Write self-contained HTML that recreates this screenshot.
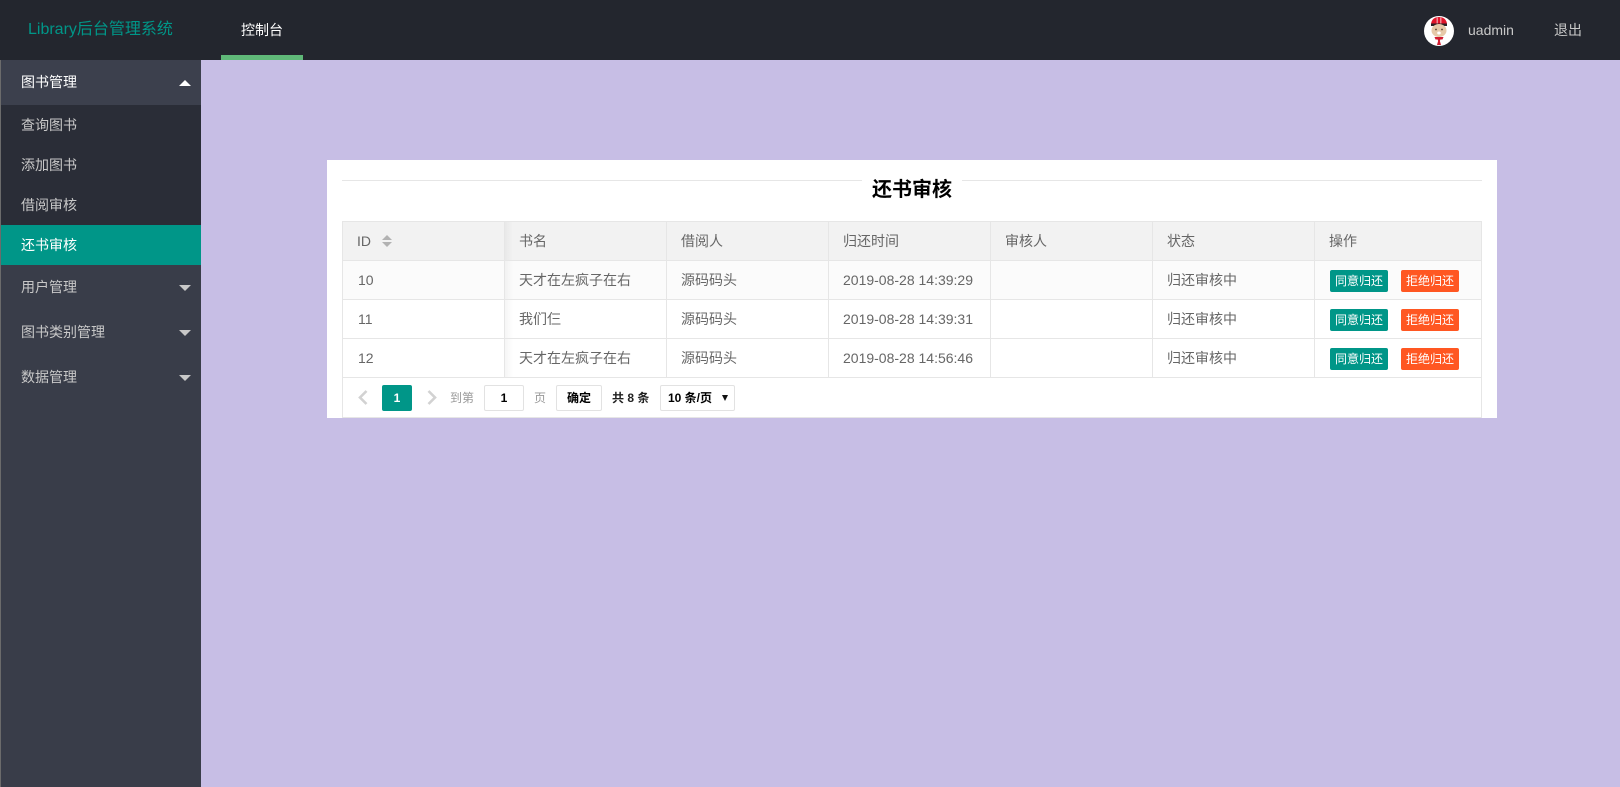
<!DOCTYPE html>
<html lang="zh-CN">
<head>
<meta charset="utf-8">
<title>还书审核</title>
<style>
*{box-sizing:border-box;margin:0;padding:0}
html,body{width:1620px;height:787px;overflow:hidden;background:#c7bee5;font-family:"Liberation Sans","WenQuanYi Zen Hei","Noto Sans CJK SC",sans-serif;font-size:14px;color:#666}
.a{position:absolute;white-space:nowrap}
#hd{left:0;top:0;width:1620px;height:60px;background:#23262e}
#side{left:0;top:60px;width:201px;height:727px;background:#393d49;border-left:1px solid #6b6b6b}
.mi{position:absolute;left:0;width:200px;line-height:45px;height:45px;padding-left:20px;color:#c8c8c8}
.ci{position:absolute;left:0;width:200px;line-height:40px;height:40px;padding-left:20px;color:#c8c8c8;background:#2a2d37}
.tri{position:absolute;left:178px;width:0;height:0;border-left:6px solid transparent;border-right:6px solid transparent}
#card{left:327px;top:160px;width:1170px;height:258px;background:#fff}
.line{position:absolute;height:1px;background:#e6e6e6;top:20px}
.h{position:absolute;left:342px;width:1140px;height:1px;background:#e6e6e6}
.v{position:absolute;top:221px;width:1px;height:156px;background:#e6e6e6}
.c{position:absolute;line-height:38px;height:38px;color:#666}
.btn{position:absolute;width:58px;height:22px;line-height:22px;text-align:center;color:#fff;font-size:12px;border-radius:2px}
.box{position:absolute;top:385px;height:26px;line-height:24px;text-align:center;border:1px solid #e2e2e2;border-radius:2px;font-size:12px;font-weight:bold;color:#000;background:#fff}
.pt{position:absolute;top:385px;line-height:26px;font-size:12px;color:#999}
</style>
</head>
<body>
<div id="hd" class="a"></div>
<div class="a" style="left:28px;top:0;line-height:60px;font-size:16px;color:#009688">Library后台管理系统</div>
<div class="a" style="left:241px;top:0;line-height:60px;color:#fff">控制台</div>
<div class="a" style="left:221px;top:55px;width:82px;height:5px;background:#5fb878"></div>
<svg class="a" style="left:1424px;top:16px" width="30" height="30" viewBox="0 0 30 30">
<circle cx="15" cy="15" r="15" fill="#fff"/>
<path d="M7 9C7 3 11 1 15 1s8 2 8 8z" fill="#e0162b"/>
<path d="M12.500 1.500h1.500v6h-1.500zM16 1.500h1.500v6H16z" fill="#f08a94"/>
<rect x="7" y="7.500" width="16" height="2.500" fill="#2a2024"/>
<ellipse cx="15" cy="14.500" rx="7.500" ry="6.500" fill="#e6c9a8"/>
<circle cx="12" cy="13.500" r=".9" fill="#5a4030"/><circle cx="18" cy="13.500" r=".9" fill="#5a4030"/>
<ellipse cx="15" cy="17" rx="1.800" ry="1.500" fill="#fff"/>
<path d="M10.500 21h9l-1 2.500h-7z" fill="#d21c30"/>
<path d="M13.500 23h3l-.6 2 1.100 4h-4l1.100-4z" fill="#d21c30"/>
</svg>
<div class="a" style="left:1468px;top:0;line-height:60px;color:#c8c8c8">uadmin</div>
<div class="a" style="left:1554px;top:0;line-height:60px;color:#c8c8c8">退出</div>

<div id="side" class="a">
<div class="mi" style="top:0;color:#fff;background:#3c404d">图书管理</div>
<div class="tri" style="top:20px;border-bottom:6px solid #fff"></div>
<div class="ci" style="top:45px">查询图书</div>
<div class="ci" style="top:85px">添加图书</div>
<div class="ci" style="top:125px">借阅审核</div>
<div class="ci" style="top:165px;background:#009688;color:#fff">还书审核</div>
<div class="mi" style="top:205px">用户管理</div>
<div class="tri" style="top:225px;border-top:6px solid #c8c8c8"></div>
<div class="mi" style="top:250px">图书类别管理</div>
<div class="tri" style="top:270px;border-top:6px solid #c8c8c8"></div>
<div class="mi" style="top:295px">数据管理</div>
<div class="tri" style="top:315px;border-top:6px solid #c8c8c8"></div>
</div>

<div id="card" class="a">
<div class="line" style="left:15px;width:520px"></div>
<div class="line" style="left:635px;width:520px"></div>
<div class="a" style="left:535px;width:100px;top:18px;line-height:24px;text-align:center;font-size:20px;font-weight:bold;color:#000">还书审核</div>
</div>

<div class="a" style="left:342px;top:221px;width:1140px;height:39px;background:#f2f2f2"></div>
<div class="a" style="left:342px;top:260px;width:1140px;height:39px;background:#fbfbfb"></div>
<div class="a" style="left:505px;top:222px;width:8px;height:155px;background:linear-gradient(90deg,rgba(0,0,0,.04),rgba(0,0,0,0))"></div>

<div class="h" style="top:221px"></div>
<div class="h" style="top:260px"></div>
<div class="h" style="top:299px"></div>
<div class="h" style="top:338px"></div>
<div class="h" style="top:377px"></div>
<div class="h" style="top:417px"></div>
<div class="v" style="left:342px;height:197px"></div>
<div class="v" style="left:504px"></div>
<div class="v" style="left:666px"></div>
<div class="v" style="left:828px"></div>
<div class="v" style="left:990px"></div>
<div class="v" style="left:1152px"></div>
<div class="v" style="left:1314px"></div>
<div class="v" style="left:1481px;height:197px"></div>

<div class="c" style="left:357px;top:222px">ID</div>
<div class="a" style="left:382px;top:235px;width:0;height:0;border-left:5px solid transparent;border-right:5px solid transparent;border-bottom:5px solid #b2b2b2"></div>
<div class="a" style="left:382px;top:242px;width:0;height:0;border-left:5px solid transparent;border-right:5px solid transparent;border-top:5px solid #b2b2b2"></div>
<div class="c" style="left:519px;top:222px">书名</div>
<div class="c" style="left:681px;top:222px">借阅人</div>
<div class="c" style="left:843px;top:222px">归还时间</div>
<div class="c" style="left:1005px;top:222px">审核人</div>
<div class="c" style="left:1167px;top:222px">状态</div>
<div class="c" style="left:1329px;top:222px">操作</div>

<div class="c" style="left:358px;top:261px">10</div>
<div class="c" style="left:519px;top:261px">天才在左疯子在右</div>
<div class="c" style="left:681px;top:261px">源码码头</div>
<div class="c" style="left:843px;top:261px">2019-08-28 14:39:29</div>
<div class="c" style="left:1167px;top:261px">归还审核中</div>
<div class="btn" style="left:1330px;top:270px;background:#009688">同意归还</div>
<div class="btn" style="left:1401px;top:270px;background:#ff5722">拒绝归还</div>

<div class="c" style="left:358px;top:300px">11</div>
<div class="c" style="left:519px;top:300px">我们仨</div>
<div class="c" style="left:681px;top:300px">源码码头</div>
<div class="c" style="left:843px;top:300px">2019-08-28 14:39:31</div>
<div class="c" style="left:1167px;top:300px">归还审核中</div>
<div class="btn" style="left:1330px;top:309px;background:#009688">同意归还</div>
<div class="btn" style="left:1401px;top:309px;background:#ff5722">拒绝归还</div>

<div class="c" style="left:358px;top:339px">12</div>
<div class="c" style="left:519px;top:339px">天才在左疯子在右</div>
<div class="c" style="left:681px;top:339px">源码码头</div>
<div class="c" style="left:843px;top:339px">2019-08-28 14:56:46</div>
<div class="c" style="left:1167px;top:339px">归还审核中</div>
<div class="btn" style="left:1330px;top:348px;background:#009688">同意归还</div>
<div class="btn" style="left:1401px;top:348px;background:#ff5722">拒绝归还</div>

<svg class="a" style="left:356px;top:389px" width="14" height="17" viewBox="0 0 14 17"><path d="M10.500 2L4 8.500l6.500 6.500" fill="none" stroke="#d2d2d2" stroke-width="2.600"/></svg>
<div class="box" style="left:382px;width:30px;background:#009688;border-color:#009688;color:#fff">1</div>
<svg class="a" style="left:425px;top:389px" width="14" height="17" viewBox="0 0 14 17"><path d="M3.500 2L10 8.500 3.500 15" fill="none" stroke="#d2d2d2" stroke-width="2.600"/></svg>
<div class="pt" style="left:450px">到第</div>
<div class="box" style="left:484px;width:40px">1</div>
<div class="pt" style="left:534px">页</div>
<div class="box" style="left:556px;width:46px">确定</div>
<div class="pt" style="left:612px;color:#222;font-weight:bold">共 8 条</div>
<div class="box" style="left:660px;width:75px;text-align:left;padding-left:7px">10 条/页</div>
<div class="a" style="left:722px;top:395px;width:0;height:0;border-left:3.500px solid transparent;border-right:3.500px solid transparent;border-top:6px solid #111"></div>
</body>
</html>
